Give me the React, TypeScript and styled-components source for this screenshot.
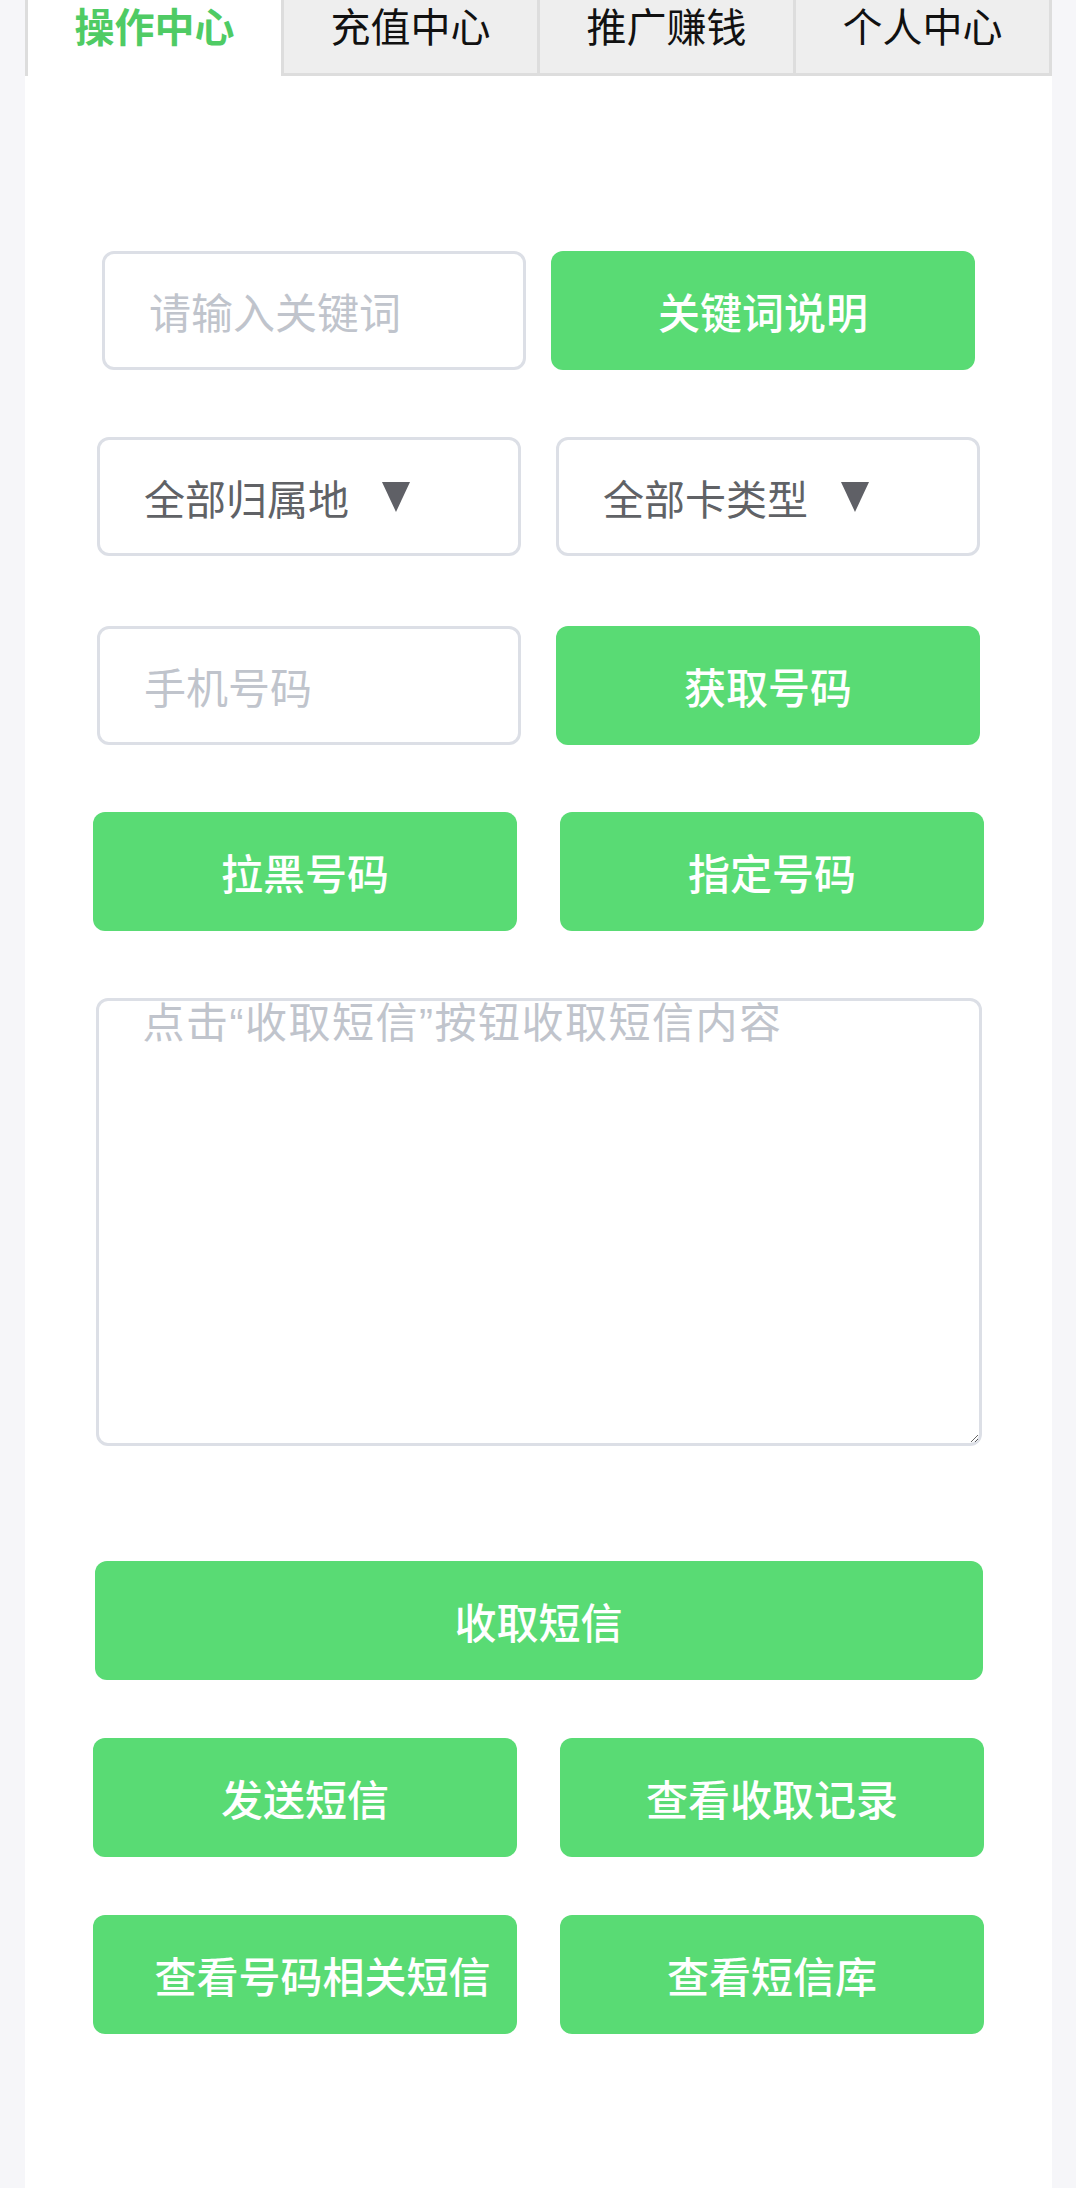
import React from "react";
import styled, { createGlobalStyle } from "styled-components";

const GlobalStyle = createGlobalStyle`
  html, body {
    margin: 0;
    padding: 0;
    background: #f6f6f9;
  }
  body {
    font-family: "Noto Sans CJK SC", "Noto Sans", sans-serif;
  }
  * {
    box-sizing: border-box;
  }
`;

const Page = styled.div`
  width: 1027px;
  min-height: 2188px;
  margin-left: 25px;
  background: #ffffff;
`;

const TabBar = styled.div`
  display: flex;
  height: 76px;
`;

const Tab = styled.div<{ $active?: boolean }>`
  flex: 1;
  display: flex;
  justify-content: center;
  align-items: flex-start;
  line-height: 50px;
  font-size: 40px;
  font-weight: ${(p) => (p.$active ? 700 : 400)};
  color: ${(p) => (p.$active ? "#4fcb64" : "#111111")};
  background: ${(p) => (p.$active ? "#ffffff" : "#eeeeee")};
  border-left: 3px solid #dddddd;
  border-bottom: ${(p) => (p.$active ? "none" : "3px solid #dddddd")};

  &:last-child {
    border-right: 3px solid #dddddd;
  }
`;

const Form = styled.div`
  display: flex;
  flex-direction: column;
  align-items: center;
  padding-top: 175px;
  padding-bottom: 120px;
`;

const Row = styled.div<{ $gap: number; $mt?: number }>`
  display: flex;
  justify-content: center;
  gap: ${(p) => p.$gap}px;
  margin-top: ${(p) => p.$mt ?? 0}px;
`;

const Field = styled.input`
  width: 424px;
  height: 119px;
  padding: 0 44px;
  border: 3px solid #dcdfe6;
  border-radius: 12px;
  font-family: inherit;
  font-size: 42px;
  color: #606266;
  outline: none;
  background: #fff;

  &::placeholder {
    color: #c0c4cc;
  }
`;

// $indent pushes the label right, as the long label does in the original
const Button = styled.button<{ $wide?: boolean; $mt?: number; $indent?: number }>`
  width: ${(p) => (p.$wide ? 888 : 424)}px;
  height: 119px;
  margin-top: ${(p) => p.$mt ?? 0}px;
  padding: 0 0 0 ${(p) => p.$indent ?? 0}px;
  border: none;
  border-radius: 12px;
  background: #59db74;
  color: #ffffff;
  font-family: inherit;
  font-size: 42px;
  font-weight: 500;
  cursor: pointer;
`;

const Select = styled.div`
  width: 424px;
  height: 119px;
  display: flex;
  align-items: center;
  padding-left: 44px;
  border: 3px solid #dcdfe6;
  border-radius: 12px;
  font-size: 41px;
  color: #606266;
`;

const Caret = styled.span`
  width: 0;
  height: 0;
  margin-left: 33px;
  border-left: 14px solid transparent;
  border-right: 14px solid transparent;
  border-top: 30px solid #5f6066;
`;

const SmsBox = styled.textarea`
  width: 886px;
  height: 448px;
  margin-top: 67px;
  padding: 0 44px;
  border: 3px solid #dcdfe6;
  border-radius: 12px;
  font-family: "Liberation Sans", "Noto Sans CJK SC", sans-serif;
  font-size: 42px;
  line-height: 46px;
  letter-spacing: 1.5px;
  color: #606266;
  outline: none;
  resize: vertical;

  &::placeholder {
    color: #c0c4cc;
  }
`;

const tabs = ["操作中心", "充值中心", "推广赚钱", "个人中心"];

export default function App() {
  return (
    <>
      <GlobalStyle />
      <Page>
        <TabBar>
          {tabs.map((t, i) => (
            <Tab key={t} $active={i === 0}>
              {t}
            </Tab>
          ))}
        </TabBar>
        <Form>
          <Row $gap={25}>
            <Field placeholder="请输入关键词" />
            <Button>关键词说明</Button>
          </Row>
          <Row $gap={35} $mt={67}>
            <Select>
              全部归属地
              <Caret />
            </Select>
            <Select>
              全部卡类型
              <Caret />
            </Select>
          </Row>
          <Row $gap={35} $mt={70}>
            <Field placeholder="手机号码" />
            <Button>获取号码</Button>
          </Row>
          <Row $gap={43} $mt={67}>
            <Button>拉黑号码</Button>
            <Button>指定号码</Button>
          </Row>
          <SmsBox placeholder="点击“收取短信”按钮收取短信内容" />
          <Button $wide $mt={115}>
            收取短信
          </Button>
          <Row $gap={43} $mt={58}>
            <Button>发送短信</Button>
            <Button>查看收取记录</Button>
          </Row>
          <Row $gap={43} $mt={58}>
            <Button $indent={35}>查看号码相关短信</Button>
            <Button>查看短信库</Button>
          </Row>
        </Form>
      </Page>
    </>
  );
}
